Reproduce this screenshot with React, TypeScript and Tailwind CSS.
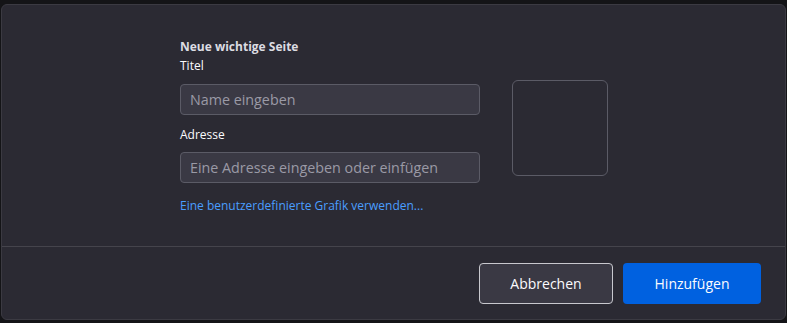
export default function App() {
  return (
    <div className="w-[787px] h-[323px] bg-[#141417] pt-[4px] pl-[1px] font-['Segoe_UI','Open_Sans',sans-serif]">
      <div className="w-[785px] h-[316px] bg-[#2b2a33] border border-[#3b3a42] rounded-[6px] flex flex-col">
        {/* Body */}
        <div className="h-[242px] flex pl-[178px] pt-[34px] border-b border-[#45444c]">
          <div className="w-[300px] flex flex-col">
            <div className="text-[12px] font-bold text-[#dcdce2] leading-[16px]">Neue wichtige Seite</div>
            <label className="mt-[3px] text-[12px] text-[#fbfbfe] leading-[16px]">Titel</label>
            <input
              placeholder="Name eingeben"
              className="mt-[10px] h-[31px] w-[300px] rounded-[4px] border border-[#5b5b66] bg-[#3a3944] px-[9px] text-[14.3px] text-[#fbfbfe] placeholder:text-[#9a9aa6] outline-none"
            />
            <label className="mt-[12px] text-[12px] text-[#fbfbfe] leading-[16px]">Adresse</label>
            <input
              placeholder="Eine Adresse eingeben oder einfügen"
              className="mt-[9px] h-[31px] w-[300px] rounded-[4px] border border-[#5b5b66] bg-[#3a3944] px-[9px] text-[14.3px] text-[#fbfbfe] placeholder:text-[#9a9aa6] outline-none"
            />
            <a className="mt-[15px] text-[12px] leading-[16px] text-[#4a9eff] cursor-pointer">
              Eine benutzerdefinierte Grafik verwenden...
            </a>
          </div>
          <div className="ml-[32px] mt-[41px] w-[96px] h-[96px] rounded-[6px] border border-[#5b5b66]" />
        </div>
        {/* Footer */}
        <div className="flex-1 flex items-center justify-end gap-[10px] pr-[24px]">
          <button className="w-[134px] h-[41px] rounded-[4px] border border-[#c8c8ce] bg-[#3a3944] text-[14px] text-[#fbfbfe]">
            Abbrechen
          </button>
          <button className="w-[138px] h-[41px] rounded-[4px] bg-[#0061e0] text-[14px] text-[#fbfbfe]">
            Hinzufügen
          </button>
        </div>
      </div>
    </div>
  );
}
